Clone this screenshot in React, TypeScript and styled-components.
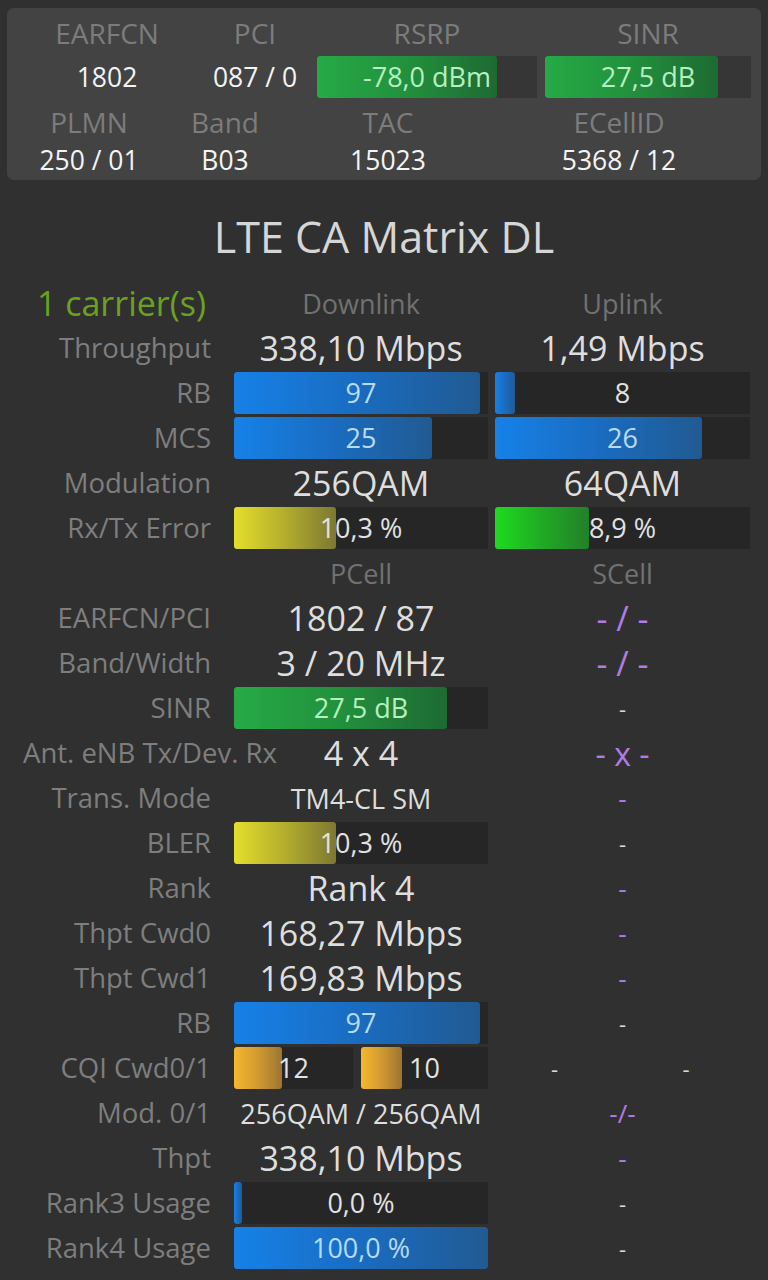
import React from 'react';
import styled, { createGlobalStyle, css } from 'styled-components';

const GlobalStyle = createGlobalStyle`
  html, body {
    margin: 0;
    padding: 0;
    background: #303030;
  }
  body {
    font-family: "Open Sans", "Noto Sans", sans-serif;
    width: 768px;
    min-height: 1280px;
  }
`;

type FillKind = 'blue' | 'green' | 'yellow' | 'lime' | 'orange';
type TextTone = 'light' | 'blue' | 'green';

const fills: Record<FillKind, string> = {
  blue: 'linear-gradient(90deg, #1681e8 0%, #1a6cc0 50%, #215a92 100%)',
  green: 'linear-gradient(90deg, #26aa46 0%, #22903d 50%, #1e6a33 100%)',
  yellow: 'linear-gradient(90deg, #e4de2c 0%, #b3ad2e 50%, #7d7832 100%)',
  lime: 'linear-gradient(90deg, #1edb1e 0%, #20aa24 50%, #238029 100%)',
  orange: 'linear-gradient(90deg, #f6b82e 0%, #d09a30 50%, #9c7532 100%)',
};

const tones: Record<TextTone, string> = {
  light: '#e2e2e2',
  blue: '#b7dcf9',
  green: '#b6f0bf',
};

const Page = styled.div`
  display: flex;
  flex-direction: column;
  padding-top: 8px;
`;

// ---- top status card ----
const TopCard = styled.div`
  margin: 0 7px;
  background: #434343;
  border-radius: 7px;
  padding: 4px 0 5px;
  display: flex;
  flex-direction: column;
  gap: 3px;
`;

const TopGrid = styled.div<{ $cols: string }>`
  display: grid;
  grid-template-columns: ${(p) => p.$cols};
  column-gap: 8px;
  row-gap: 2px;
  align-items: center;
`;

const TopLabel = styled.div`
  height: 42px;
  line-height: 42px;
  text-align: center;
  font-size: 28px;
  color: #7c7c7c;
`;

const TopValue = styled.div<{ $h?: number }>`
  height: ${(p) => p.$h ?? 42}px;
  line-height: ${(p) => p.$h ?? 42}px;
  text-align: center;
  font-size: 26.5px;
  color: #f4f4f4;
`;

// ---- meters ----
const Meter = styled.div<{ $track?: string }>`
  position: relative;
  height: 42px;
  background: ${(p) => p.$track ?? '#262626'};
  overflow: hidden;
`;

const Fill = styled.div<{ $kind: FillKind }>`
  position: absolute;
  left: 0;
  top: 0;
  bottom: 0;
  border-radius: 3px;
  background: ${(p) => fills[p.$kind]};
`;

const MeterText = styled.div<{ $tone: TextTone }>`
  position: relative;
  height: 42px;
  line-height: 42px;
  text-align: center;
  font-size: 27px;
  color: ${(p) => tones[p.$tone]};
  white-space: nowrap;
`;

function Bar({
  pct,
  kind,
  text,
  tone = 'light',
  track,
}: {
  pct: number;
  kind: FillKind;
  text: string;
  tone?: TextTone;
  track?: string;
}) {
  return (
    <Meter $track={track}>
      <Fill $kind={kind} style={{ width: `${pct}%` }} />
      <MeterText $tone={tone}>{text}</MeterText>
    </Meter>
  );
}

// ---- title ----
const Title = styled.h1`
  margin: 33px 0 21px;
  height: 48px;
  line-height: 48px;
  text-align: center;
  font-size: 43px;
  font-weight: 400;
  color: #d6d6d6;
`;

// ---- CA matrix ----
const Matrix = styled.div`
  display: grid;
  grid-template-columns: 227px 254px 255px;
  grid-auto-rows: 42px;
  column-gap: 7px;
  row-gap: 3px;
  align-items: center;
`;

const RowLabel = styled.div<{ $green?: boolean; $spill?: boolean }>`
  height: 42px;
  line-height: 42px;
  font-size: 27.5px;
  white-space: nowrap;
  color: ${(p) => (p.$green ? '#6aa220' : '#7e7e7e')};
  text-align: right;
  padding-right: 16px;
  ${(p) =>
    p.$green &&
    css`
      font-size: 34px;
      padding-right: 21px;
    `}
  ${(p) =>
    p.$spill &&
    css`
      text-align: left;
      padding: 0 0 0 23px;
      overflow: visible;
      width: 0;
    `}
`;

const ColHead = styled.div`
  text-align: center;
  font-size: 27px;
  color: #717171;
`;

const Value = styled.div<{ $small?: boolean }>`
  text-align: center;
  white-space: nowrap;
  font-size: ${(p) => (p.$small ? 27 : 34)}px;
  color: #dedede;
`;

const Dash = styled.div<{ $purple?: boolean; $size?: number }>`
  text-align: center;
  white-space: pre;
  font-size: ${(p) => p.$size ?? 22}px;
  color: ${(p) => (p.$purple ? '#b27ae4' : '#d8d8d8')};
`;

const Split = styled.div`
  display: grid;
  grid-template-columns: 119px 1fr;
  column-gap: 8px;
  align-items: center;
`;

export default function App() {
  return (
    <>
      <GlobalStyle />
      <Page>
        <TopCard>
          <TopGrid $cols="6px 172px 108px 220px 206px">
            <span />
            <TopLabel>EARFCN</TopLabel>
            <TopLabel>PCI</TopLabel>
            <TopLabel>RSRP</TopLabel>
            <TopLabel>SINR</TopLabel>
            <span />
            <TopValue>1802</TopValue>
            <TopValue>087 / 0</TopValue>
            <Bar pct={82} kind="green" text="-78,0 dBm" tone="green" track="#363636" />
            <Bar pct={84} kind="green" text="27,5 dB" tone="green" track="#363636" />
          </TopGrid>
          <TopGrid $cols="6px 136px 120px 190px 256px">
            <span />
            <TopLabel>PLMN</TopLabel>
            <TopLabel>Band</TopLabel>
            <TopLabel>TAC</TopLabel>
            <TopLabel>ECellID</TopLabel>
            <span />
            <TopValue $h={30}>250 / 01</TopValue>
            <TopValue $h={30}>B03</TopValue>
            <TopValue $h={30}>15023</TopValue>
            <TopValue $h={30}>5368 / 12</TopValue>
          </TopGrid>
        </TopCard>

        <Title>LTE CA Matrix DL</Title>

        <Matrix>
          <RowLabel $green>1 carrier(s)</RowLabel>
          <ColHead>Downlink</ColHead>
          <ColHead>Uplink</ColHead>

          <RowLabel>Throughput</RowLabel>
          <Value>338,10 Mbps</Value>
          <Value>1,49 Mbps</Value>

          <RowLabel>RB</RowLabel>
          <Bar pct={97} kind="blue" text="97" tone="blue" />
          <Bar pct={8} kind="blue" text="8" />

          <RowLabel>MCS</RowLabel>
          <Bar pct={78} kind="blue" text="25" tone="blue" />
          <Bar pct={81} kind="blue" text="26" tone="blue" />

          <RowLabel>Modulation</RowLabel>
          <Value>256QAM</Value>
          <Value>64QAM</Value>

          <RowLabel>Rx/Tx Error</RowLabel>
          <Bar pct={40} kind="yellow" text="10,3 %" />
          <Bar pct={37} kind="lime" text="8,9 %" />

          <span />
          <ColHead>PCell</ColHead>
          <ColHead>SCell</ColHead>

          <RowLabel>EARFCN/PCI</RowLabel>
          <Value>1802 / 87</Value>
          <Dash $purple $size={34}>- / -</Dash>

          <RowLabel>Band/Width</RowLabel>
          <Value>3 / 20 MHz</Value>
          <Dash $purple $size={34}>- / -</Dash>

          <RowLabel>SINR</RowLabel>
          <Bar pct={84} kind="green" text="27,5 dB" tone="green" />
          <Dash>-</Dash>

          <RowLabel $spill>Ant. eNB Tx/Dev. Rx</RowLabel>
          <Value>4 x 4</Value>
          <Dash $purple $size={32}>- x -</Dash>

          <RowLabel>Trans. Mode</RowLabel>
          <Value $small>TM4-CL SM</Value>
          <Dash $purple $size={26}>-</Dash>

          <RowLabel>BLER</RowLabel>
          <Bar pct={40} kind="yellow" text="10,3 %" />
          <Dash>-</Dash>

          <RowLabel>Rank</RowLabel>
          <Value>Rank 4</Value>
          <Dash $purple $size={26}>-</Dash>

          <RowLabel>Thpt Cwd0</RowLabel>
          <Value>168,27 Mbps</Value>
          <Dash $purple $size={26}>-</Dash>

          <RowLabel>Thpt Cwd1</RowLabel>
          <Value>169,83 Mbps</Value>
          <Dash $purple $size={26}>-</Dash>

          <RowLabel>RB</RowLabel>
          <Bar pct={97} kind="blue" text="97" tone="blue" />
          <Dash>-</Dash>

          <RowLabel>CQI Cwd0/1</RowLabel>
          <Split>
            <Bar pct={40} kind="orange" text="12" />
            <Bar pct={32} kind="orange" text="10" />
          </Split>
          <Split>
            <Dash>-</Dash>
            <Dash>-</Dash>
          </Split>

          <RowLabel>Mod. 0/1</RowLabel>
          <Value $small>256QAM / 256QAM</Value>
          <Dash $purple $size={26}>-/-</Dash>

          <RowLabel>Thpt</RowLabel>
          <Value>338,10 Mbps</Value>
          <Dash $purple $size={26}>-</Dash>

          <RowLabel>Rank3 Usage</RowLabel>
          <Bar pct={3} kind="blue" text="0,0 %" />
          <Dash>-</Dash>

          <RowLabel>Rank4 Usage</RowLabel>
          <Bar pct={100} kind="blue" text="100,0 %" tone="blue" />
          <Dash>-</Dash>
        </Matrix>
      </Page>
    </>
  );
}
